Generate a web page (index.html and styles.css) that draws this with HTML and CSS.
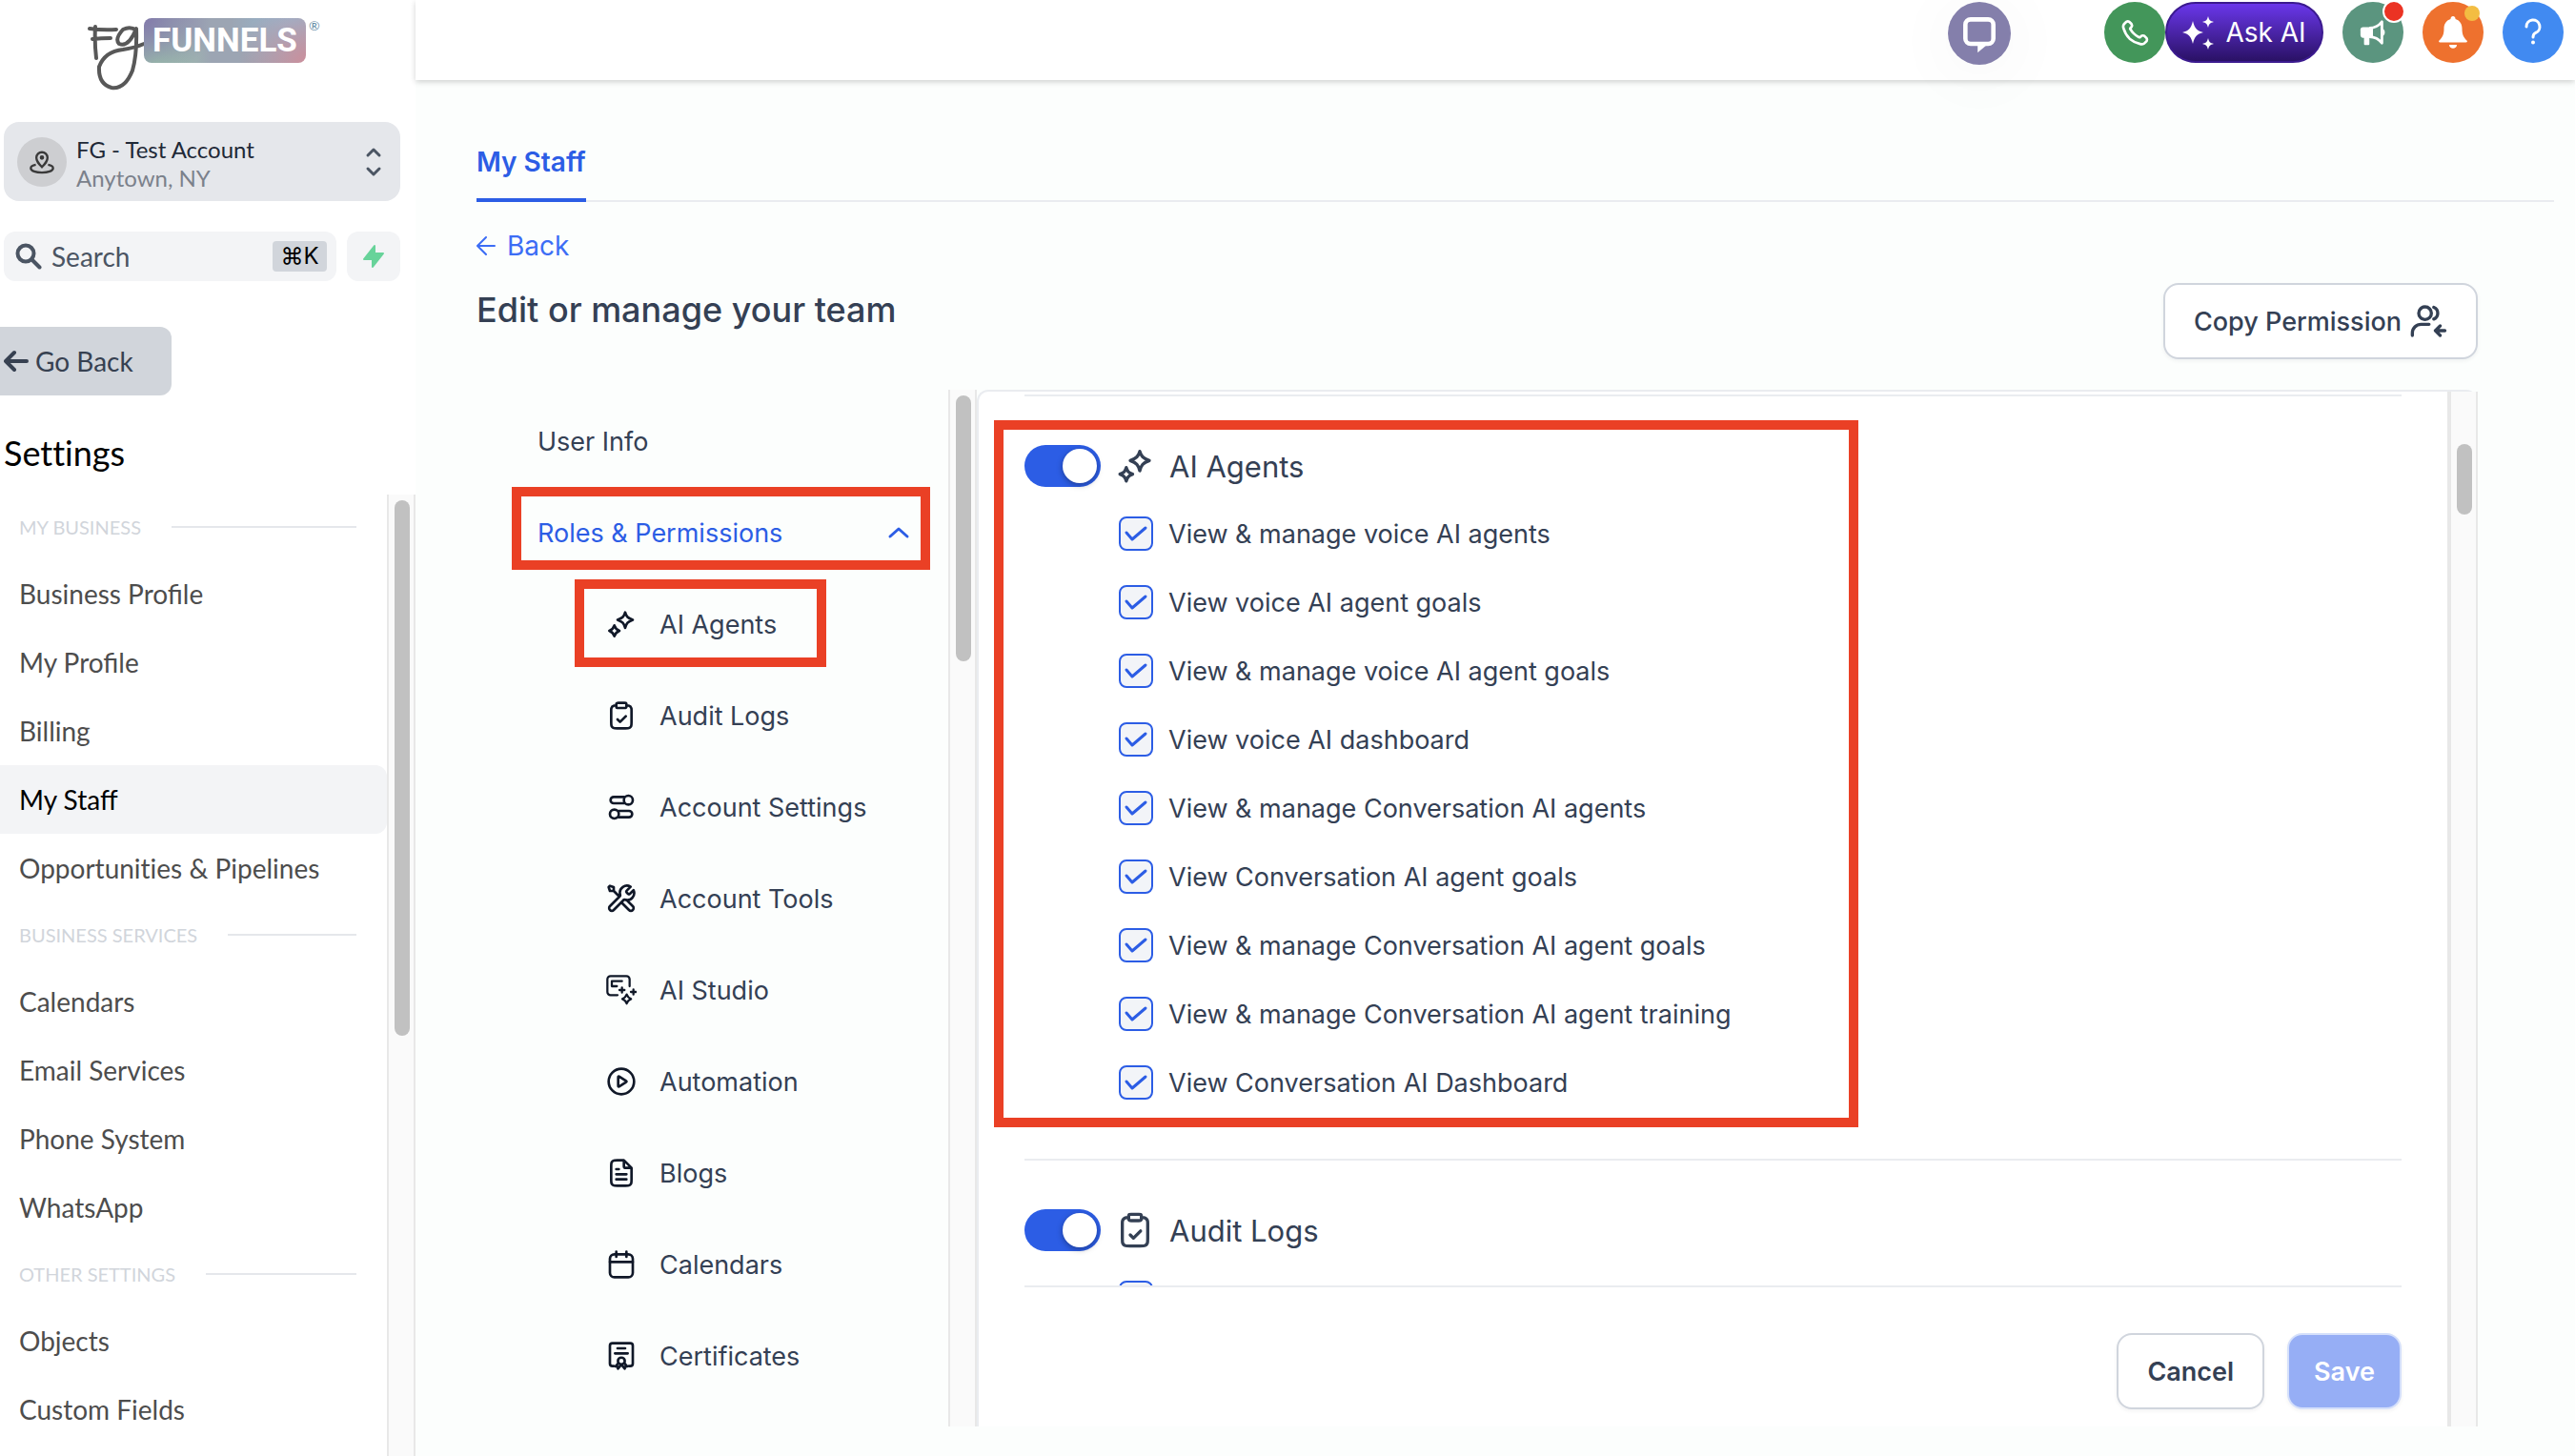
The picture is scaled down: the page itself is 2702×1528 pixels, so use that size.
FILE: index.html
```html
<!DOCTYPE html>
<html lang="en">
<head>
<meta charset="utf-8">
<meta name="viewport" content="width=device-width, initial-scale=1">
<title>My Staff - FG Funnels</title>
<link rel="stylesheet" href="styles.css">
</head>
<body>
<svg class="sprite" aria-hidden="true">
  <symbol id="i-stars" viewBox="0 0 24 24"><path d="M15 2.8 C15.9 6 17 7.1 21 8.6 C17 10.1 15.9 11.300 15 15 C14.100 11.300 13 10.100 9 8.600 C13 7.100 14.100 6 15 2.800Z M6.500 13 C7.200 15.400 7.900 16.200 10.500 17.200 C7.900 18.200 7.200 19 6.500 21.500 C5.800 19 5.100 18.200 2.500 17.200 C5.100 16.200 5.800 15.400 6.500 13Z"/></symbol>
  <symbol id="i-clipboard" viewBox="0 0 24 24"><path d="M16 4c.93 0 1.400 0 1.780.100a3 3 0 0 1 2.120 2.120C20 6.600 20 7.070 20 8v9.200c0 1.680 0 2.520-.330 3.160a3 3 0 0 1-1.310 1.310C17.720 22 16.880 22 15.200 22H8.800c-1.680 0-2.520 0-3.160-.330a3 3 0 0 1-1.310-1.310C4 19.720 4 18.880 4 17.200V8c0-.930 0-1.400.100-1.780a3 3 0 0 1 2.120-2.120C6.600 4 7.070 4 8 4m1 11 2 2 4.500-4.500M9.600 6h4.800c.560 0 .840 0 1.050-.110a1 1 0 0 0 .440-.440C16 5.240 16 4.960 16 4.400v-.800c0-.560 0-.840-.110-1.050a1 1 0 0 0-.440-.440C15.240 2 14.960 2 14.400 2H9.600c-.560 0-.840 0-1.050.110a1 1 0 0 0-.440.440C8 2.760 8 3.040 8 3.600v.800c0 .560 0 .840.110 1.050a1 1 0 0 0 .440.440C8.760 6 9.040 6 9.600 6Z"/></symbol>
  <symbol id="i-sliders" viewBox="0 0 24 24"><path d="M14 4H6a2.500 2.500 0 0 0 0 5h8M10 15h8a2.500 2.500 0 0 1 0 5h-8"/><circle cx="17.500" cy="6.500" r="3.500"/><circle cx="6.500" cy="17.500" r="3.500"/></symbol>
  <symbol id="i-tools" viewBox="0 0 24 24"><path d="m6 6 4.500 4.500M6 6H3L2 3l1-1 3 1v3Zm13.260-3.260-2.630 2.630c-.400.400-.590.590-.670.820a1 1 0 0 0 0 .620c.080.230.270.430.670.820l.240.240c.400.400.590.590.820.670a1 1 0 0 0 .620 0c.230-.080.430-.270.820-.670l2.470-2.460A5.500 5.500 0 0 1 15.400 13c-.530-.110-.800-.160-.960-.150a1.100 1.100 0 0 0-.430.120c-.140.070-.290.220-.570.500L6 21a2.120 2.120 0 0 1-3-3l7.500-7.500c.290-.290.430-.430.500-.570.090-.160.110-.250.120-.430.010-.160-.040-.430-.150-.960a5.500 5.500 0 0 1 8.290-5.800ZM12 15l6 6a2.120 2.120 0 0 0 3-3l-5-5"/></symbol>
  <symbol id="i-studio" viewBox="0 0 24 24"><path stroke-width="1.700" d="M9 16H3.500A2.500 2.500 0 0 1 1 13.500v-10A2.500 2.500 0 0 1 3.500 1H16a2.500 2.500 0 0 1 2.500 2.500V9M4.500 9V5h8M4.500 9h4M12.500 10v4M10.500 12h4M21.500 11.500v4M19.500 13.500h4M16.200 15.500c.700 2 1.300 2.700 3.400 3.500-2.100.800-2.700 1.500-3.400 3.700-.700-2.200-1.300-2.900-3.400-3.700 2.100-.800 2.700-1.500 3.400-3.500Z"/></symbol>
  <symbol id="i-play" viewBox="0 0 24 24"><circle cx="12" cy="12" r="10"/><path d="M9.500 8.970c0-.480 0-.720.100-.850a.500.500 0 0 1 .360-.200c.170-.010.370.120.770.380l4.720 3.030c.350.220.520.330.580.480a.500.500 0 0 1 0 .380c-.060.150-.230.260-.580.480l-4.720 3.030c-.400.260-.600.390-.770.380a.500.500 0 0 1-.360-.200c-.100-.130-.100-.370-.100-.850V8.970Z"/></symbol>
  <symbol id="i-file" viewBox="0 0 24 24"><path d="M14 2.270V6.400c0 .560 0 .840.110 1.050a1 1 0 0 0 .440.440c.210.110.490.110 1.050.110h4.130M16 13H8M16 17H8M10 9H8M14 2H8.800c-1.680 0-2.520 0-3.160.330a3 3 0 0 0-1.310 1.310C4 4.280 4 5.120 4 6.800v10.400c0 1.680 0 2.520.330 3.160a3 3 0 0 0 1.310 1.310C6.280 22 7.120 22 8.800 22h6.400c1.680 0 2.520 0 3.160-.330a3 3 0 0 0 1.310-1.310C20 19.720 20 18.880 20 17.200V8l-6-6Z"/></symbol>
  <symbol id="i-calendar" viewBox="0 0 24 24"><rect x="3" y="4" width="18" height="18" rx="3.500"/><path d="M21 10H3M16 2v4M8 2v4"/></symbol>
  <symbol id="i-cert" viewBox="0 0 24 24"><path d="M6 20H5a2 2 0 0 1-2-2V4a2 2 0 0 1 2-2h14a2 2 0 0 1 2 2v14a2 2 0 0 1-2 2h-1M9 6h6M7 10h10"/><circle cx="12" cy="16" r="2.700"/><path d="m9.800 17.500-2.300 2.700 1.500.300.300 1.500 2.300-2.800M14.200 17.500l2.300 2.700-1.500.300-.300 1.500-2.300-2.800"/></symbol>
</svg>

<div class="app">
  <aside class="sidebar">
    <a class="logo" href="#" aria-label="FG Funnels home">
      <svg class="logo-mark" viewBox="0 0 60 70" aria-hidden="true"><path d="M2 4 Q16 6 30 5M8 2Q7 18 9 35M5 15Q14 14 24 14M51 6Q45 1 37 5 Q28 15 33 20 Q43 24 51 4 Q52 30 47 48 Q39 68 25 66 Q11 62 12 44 Q18 28 37 26 Q50 24 59 20"/></svg>
      <span class="logo-badge">FUNNELS</span><span class="logo-reg">®</span>
    </a>

    <button class="account" type="button">
      <span class="account-pin"><svg viewBox="0 0 24 24" aria-hidden="true"><path d="M12 16.500c3-3 5-5 5-8.300a5 5 0 0 0-10 0c0 3.300 2 5.300 5 8.300Z"/><circle cx="12" cy="8" r="1"/><path d="M6.500 14.500C3.500 15 2 16.200 2 17.500 2 20 6.500 21.500 12 21.500s10-1.500 10-4c0-1.300-1.500-2.500-4.500-3"/></svg></span>
      <span class="account-text"><span class="account-name">FG - Test Account</span><span class="account-place">Anytown, NY</span></span>
      <svg class="account-caret" viewBox="0 0 18 32" aria-hidden="true"><path d="m3 9 6-6 6 6M3 23l6 6 6-6"/></svg>
    </button>

    <div class="search-row">
      <label class="search">
        <svg viewBox="0 0 28 28" aria-hidden="true"><circle cx="11" cy="11" r="8.500"/><path d="m17.500 17.500 8 8"/></svg>
        <input type="search" placeholder="Search" aria-label="Search">
        <kbd>⌘K</kbd>
      </label>
      <button class="bolt" type="button" aria-label="Quick actions"><svg viewBox="0 0 24 26" aria-hidden="true"><path d="M13 2v8h9L11 24v-8H2Z"/></svg></button>
    </div>

    <a class="go-back" href="#"><svg viewBox="0 0 26 24" aria-hidden="true"><path d="M24 12H3M11 3l-9 9 9 9"/></svg>Go Back</a>
    <h1 class="settings-title">Settings</h1>

    <div class="settings-scroll">
      <nav class="settings-nav" aria-label="Settings">
        <h2>MY BUSINESS</h2>
        <a href="#">Business Profile</a>
        <a href="#">My Profile</a>
        <a href="#">Billing</a>
        <a href="#" class="current" aria-current="page">My Staff</a>
        <a href="#" class="no-ligatures">Opportunities &amp; Pipelines</a>
        <h2>BUSINESS SERVICES</h2>
        <a href="#">Calendars</a>
        <a href="#">Email Services</a>
        <a href="#">Phone System</a>
        <a href="#">WhatsApp</a>
        <h2>OTHER SETTINGS</h2>
        <a href="#">Objects</a>
        <a href="#">Custom Fields</a>
      </nav>
      <div class="scrollbar scrollbar-settings" aria-hidden="true"><span></span></div>
    </div>
  </aside>

  <div class="page">
    <header class="topbar">
      <button class="round chat" type="button" aria-label="Chat"><svg viewBox="0 0 48 48" aria-hidden="true"><path d="M14 8h20a6 6 0 0 1 6 6v16a6 6 0 0 1-6 6H14a6 6 0 0 1-6-6V14a6 6 0 0 1 6-6Z" fill="none" stroke="#fff" stroke-width="5"/><path d="M22 36h12L22 46Z" fill="#fff"/></svg></button>
      <button class="round phone" type="button" aria-label="Call"><svg viewBox="0 0 24 24" aria-hidden="true"><path d="M8.380 8.850a14.600 14.600 0 0 0 2.850 4.010 14.600 14.600 0 0 0 4.010 2.850c.120.060.190.090.270.120.280.080.620.020.860-.150.070-.050.130-.110.250-.230.370-.370.550-.550.740-.670a2 2 0 0 1 2.180 0c.190.120.370.300.740.670l.200.200c.560.560.840.840.990 1.140a2 2 0 0 1 0 1.810c-.150.300-.430.580-.990 1.140l-.170.160c-.550.550-.820.830-1.200 1.040-.420.230-1.060.400-1.530.400-.430 0-.730-.080-1.320-.250A19 19 0 0 1 8.040 17a19 19 0 0 1-4.850-8.270c-.170-.590-.250-.880-.260-1.320 0-.480.170-1.120.400-1.530.210-.370.490-.650 1.040-1.200l.160-.160c.560-.560.840-.840 1.140-.990a2 2 0 0 1 1.810 0c.300.150.580.430 1.140.990l.200.200c.370.370.550.550.670.740a2 2 0 0 1 0 2.180c-.120.190-.300.370-.670.740-.120.120-.180.180-.230.250-.160.240-.220.590-.140.860.030.080.060.150.120.270Z" fill="none" stroke="#fff" stroke-width="2"/></svg></button>
      <button class="ask-ai" type="button"><svg viewBox="0 0 34 46" aria-hidden="true"><path d="M11 11c2 8 4 10 11 12-7 2-9 4-11 12-2-8-4-10-11-12 7-2 9-4 11-12ZM27 6c1 4 2 5 6 6-4 1-5 2-6 6-1-4-2-5-6-6 4-1 5-2 6-6ZM27 29c1 4 2 5 6 6-4 1-5 2-6 6-1-4-2-5-6-6 4-1 5-2 6-6Z"/></svg>Ask AI</button>
      <button class="round news" type="button" aria-label="Announcements"><svg viewBox="0 0 32 32" aria-hidden="true"><path d="M5 10h11v12H5a3 3 0 0 1-3-3v-6a3 3 0 0 1 3-3Z"/><path d="M6 20h6v9a1 1 0 0 1-1 1H7a1 1 0 0 1-1-1Z"/><path d="M12 11c6 0 11-3 14-7v24c-3-4-8-7-14-7" fill="none" stroke="#fff" stroke-width="3" stroke-linejoin="round"/><path d="M27 12c3 1 3 7 0 8Z"/></svg><span class="dot dot-red"></span></button>
      <button class="round bell" type="button" aria-label="Notifications"><svg viewBox="0 0 32 36" aria-hidden="true"><path d="M16 1a2.500 2.500 0 0 1 2.500 3c5 1.500 7 5.500 7 10 0 7 2 9.500 5 12.500.800 1 .300 2-1 2H2.500c-1.300 0-1.800-1-1-2 3-3 5-5.500 5-12.500 0-4.500 2-8.500 7-10A2.500 2.500 0 0 1 16 1ZM12 31h8c0 5-8 5-8 0Z"/></svg><span class="dot dot-yellow"></span></button>
      <button class="round help" type="button" aria-label="Help"><svg viewBox="0 0 24 32" aria-hidden="true"><path d="M5 10a7 7 0 1 1 9.500 6.500C12.500 17.500 12 19 12 21" fill="none" stroke="#fff" stroke-width="3" stroke-linecap="round"/><circle cx="12" cy="26.500" r="2"/></svg></button>
    </header>

    <div class="tabs" role="tablist"><button class="tab" type="button" role="tab" aria-selected="true">My Staff</button></div>

    <main class="content">
      <a class="back" href="#"><svg viewBox="0 0 20 22" aria-hidden="true"><path d="M19 11H2M10 2l-9 9 9 9"/></svg>Back</a>
      <div class="heading">
        <h2>Edit or manage your team</h2>
        <button class="btn" type="button">Copy Permission<svg viewBox="0 0 24 24" aria-hidden="true"><path d="M2 21v-1.500A5.500 5.500 0 0 1 7.500 14H12.500M15.500 3.300a4 4 0 0 1 0 7.400M22.500 18H17M19.500 15l-3 3 3 3"/><circle cx="10" cy="7" r="4"/></svg></button>
      </div>

      <div class="workspace">
        <nav class="menu" aria-label="Team member">
          <a class="menu-item" href="#">User Info</a>
          <a class="menu-item active" href="#">Roles &amp; Permissions<svg viewBox="0 0 24 24" aria-hidden="true"><path d="m3 16 9-8 9 8"/></svg><span class="mark mark-roles"></span></a>
          <a class="menu-sub" href="#"><svg class="icon" aria-hidden="true"><use href="#i-stars"/></svg>AI Agents<span class="mark mark-agents"></span></a>
          <a class="menu-sub" href="#"><svg class="icon" aria-hidden="true"><use href="#i-clipboard"/></svg>Audit Logs</a>
          <a class="menu-sub" href="#"><svg class="icon" aria-hidden="true"><use href="#i-sliders"/></svg>Account Settings</a>
          <a class="menu-sub" href="#"><svg class="icon" aria-hidden="true"><use href="#i-tools"/></svg>Account Tools</a>
          <a class="menu-sub" href="#"><svg class="icon" aria-hidden="true"><use href="#i-studio"/></svg>AI Studio</a>
          <a class="menu-sub" href="#"><svg class="icon" aria-hidden="true"><use href="#i-play"/></svg>Automation</a>
          <a class="menu-sub" href="#"><svg class="icon" aria-hidden="true"><use href="#i-file"/></svg>Blogs</a>
          <a class="menu-sub" href="#"><svg class="icon" aria-hidden="true"><use href="#i-calendar"/></svg>Calendars</a>
          <a class="menu-sub" href="#"><svg class="icon" aria-hidden="true"><use href="#i-cert"/></svg>Certificates</a>
        </nav>
        <div class="scrollbar scrollbar-menu" aria-hidden="true"><span></span></div>

        <section class="panel">
          <form class="panel-body">
            <div class="permissions">
              <section class="group">
                <label class="group-head"><input class="switch" type="checkbox" role="switch" checked><svg class="icon" aria-hidden="true"><use href="#i-stars"/></svg>AI Agents</label>
                <label class="perm"><input type="checkbox" checked>View &amp; manage voice AI agents</label>
                <label class="perm"><input type="checkbox" checked>View voice AI agent goals</label>
                <label class="perm"><input type="checkbox" checked>View &amp; manage voice AI agent goals</label>
                <label class="perm"><input type="checkbox" checked>View voice AI dashboard</label>
                <label class="perm"><input type="checkbox" checked>View &amp; manage Conversation AI agents</label>
                <label class="perm"><input type="checkbox" checked>View Conversation AI agent goals</label>
                <label class="perm"><input type="checkbox" checked>View &amp; manage Conversation AI agent goals</label>
                <label class="perm"><input type="checkbox" checked>View &amp; manage Conversation AI agent training</label>
                <label class="perm"><input type="checkbox" checked>View Conversation AI Dashboard</label>
                <span class="mark mark-group"></span>
              </section>
              <section class="group">
                <label class="group-head"><input class="switch" type="checkbox" role="switch" checked><svg class="icon" aria-hidden="true"><use href="#i-clipboard"/></svg>Audit Logs</label>
                <div class="perm"><input type="checkbox" checked aria-label="Audit logs permission"></div>
              </section>
            </div>
            <div class="actions">
              <button class="btn" type="button">Cancel</button>
              <button class="btn btn-save" type="submit" disabled>Save</button>
            </div>
          </form>
          <div class="scrollbar scrollbar-panel" aria-hidden="true"><span></span></div>
        </section>
      </div>
    </main>
  </div>
</div>
</body>
</html>
```
FILE: styles.css
```css
:root {
  --ink: #344054;
  --blue: #2c5de5;
  --line: #eaecf0;
  --mark: #ea4025;
}

* { box-sizing: border-box; }

body {
  margin: 0;
  font-family: Inter, "Liberation Sans", sans-serif;
  font-size: 28px;
  color: var(--ink);
  background: #fcfefd;
}

a { color: inherit; text-decoration: none; }
button, input { font: inherit; color: inherit; margin: 0; }
button { border: 0; padding: 0; background: none; cursor: pointer; }
svg { display: block; flex: none; }
h1, h2 { margin: 0; }
.sprite { display: none; }

.app { display: flex; height: 100vh; overflow: hidden; }

/* Sidebar */
.sidebar {
  width: 436px;
  flex: none;
  display: flex;
  flex-direction: column;
  background: #fff;
  font-family: Lato, "Liberation Sans", sans-serif;
}

.logo { display: flex; align-items: flex-start; height: 128px; flex: none; padding: 19px 0 0 92px; }
.logo-mark { width: 60px; height: 70px; margin-top: 7px; fill: none; stroke: #585858; stroke-width: 4; stroke-linecap: round; stroke-linejoin: round; }
.logo-badge {
  width: 170px;
  height: 47px;
  margin-left: -1px;
  border-radius: 8px;
  font: 700 35px/47px Roboto, "Liberation Sans", sans-serif;
  text-align: center;
  color: #fff;
  background:
    radial-gradient(circle at 0 0, #827aab, transparent 40%),
    radial-gradient(circle at 8% 100%, #9fcbaa, transparent 35%),
    radial-gradient(circle at 100% 100%, #cb8f9c, transparent 40%),
    radial-gradient(circle at 92% 0, #93b9d2, transparent 40%),
    #9ca5b3;
}
.logo-reg { margin-left: 3px; font-size: 14px; line-height: 16px; color: #5f8ba6; }

.account {
  display: flex;
  align-items: center;
  gap: 10px;
  height: 83px;
  flex: none;
  margin: 0 16px 0 4px;
  padding: 0 19px 0 14px;
  border-radius: 16px;
  background: #e5e7eb;
  text-align: left;
}
.account-pin { display: grid; place-items: center; width: 52px; height: 52px; border-radius: 50%; background: #cdced1; }
.account-pin svg { width: 28px; height: 28px; fill: none; stroke: #3a3a3a; stroke-width: 2; }
.account-text { flex: 1; display: flex; flex-direction: column; padding-top: 5px; font-size: 24px; line-height: 30px; }
.account-name { color: #1f2937; }
.account-place { color: #7b818b; }
.account-caret { width: 18px; height: 32px; fill: none; stroke: #4b5563; stroke-width: 3; stroke-linecap: round; stroke-linejoin: round; }

.search-row { display: flex; gap: 11px; margin: 32px 16px 0 4px; height: 52px; flex: none; }
.search { flex: 1; min-width: 0; display: flex; align-items: center; gap: 10px; padding: 0 10px 0 12px; border-radius: 12px; background: #f3f4f6; color: #4b5563; }
.search svg { width: 28px; height: 28px; fill: none; stroke: #4b5563; stroke-width: 4; stroke-linecap: round; }
.search input { flex: 1; min-width: 0; border: 0; padding: 0; background: none; outline: 0; }
.search input::placeholder { color: #4b5563; opacity: 1; }
.search kbd { width: 57px; flex: none; border-radius: 4px; background: #d1d5db; color: #000; font: 24px/32px Inter, "DejaVu Sans", sans-serif; text-align: center; }
.bolt { display: grid; place-items: center; width: 56px; flex: none; border-radius: 12px; background: #f3f4f6; }
.bolt svg { width: 24px; height: 26px; fill: #68d39a; stroke: #68d39a; stroke-width: 2; stroke-linejoin: round; }

.go-back {
  align-self: flex-start;
  display: flex;
  align-items: center;
  gap: 7px;
  width: 180px;
  height: 72px;
  flex: none;
  margin-top: 48px;
  padding: 0 0 0 4px;
  border-radius: 0 12px 12px 0;
  background: #d1d5db;
  color: #374151;
}
.go-back svg { width: 26px; height: 24px; fill: none; stroke: #374151; stroke-width: 4; stroke-linecap: round; stroke-linejoin: round; }

.settings-title { margin: 36px 0 19px 4px; font-size: 36px; line-height: 49px; font-weight: 400; color: #000; }
.settings-title, .no-ligatures { font-variant-ligatures: none; }

.settings-scroll { flex: 1; min-height: 0; display: flex; }
.settings-nav { flex: 1; overflow: hidden; color: #4d4d4d; }
.settings-nav h2 { display: flex; align-items: center; gap: 32px; height: 68px; padding: 0 32px 0 20px; font-size: 20px; font-weight: 400; color: #d1d5db; }
.settings-nav h2::after { content: ""; flex: 1; height: 2px; background: #e5e7eb; }
.settings-nav a { display: flex; align-items: center; height: 72px; padding-left: 20px; border-radius: 0 12px 12px 0; }
.settings-nav .current { background: #f3f4f6; color: #000; }

/* Always-visible scrollbar tracks */
.scrollbar { width: 30px; flex: none; padding: 6px; border: solid #e8e8e8; border-width: 0 2px; background: #fafafa; }
.scrollbar span { display: block; width: 16px; border-radius: 8px; background: #c1c1c1; }
.scrollbar-settings span { height: 562px; }
.scrollbar-menu span { height: 279px; }
.scrollbar-panel { padding-top: 55px; }
.scrollbar-panel span { height: 74px; }

/* Top bar */
.page { flex: 1; min-width: 0; display: flex; flex-direction: column; }
.topbar {
  display: flex;
  justify-content: flex-end;
  height: 84px;
  flex: none;
  padding: 2px 12px 0 0;
  background: #fff;
  box-shadow: 0 2px 6px rgba(0, 0, 0, .18);
}
.round { position: relative; display: grid; place-items: center; width: 64px; height: 64px; margin-left: 20px; border-radius: 50%; }
.round svg { fill: #fff; }
.chat { width: 66px; height: 66px; margin-right: 98px; background: #847fab; box-shadow: 0 8px 60px 20px rgba(0, 0, 0, .02); }
.chat svg { width: 44px; height: 44px; }
.phone { margin-left: 0; background: #43965a; }
.phone svg { width: 32px; height: 32px; }
.ask-ai {
  display: flex;
  align-items: center;
  justify-content: center;
  gap: 11px;
  width: 166px;
  height: 64px;
  border: 2px solid #3b1a8f;
  border-radius: 32px;
  background: linear-gradient(#6a37ea, #2a1165);
  color: #fff;
}
.ask-ai svg { width: 34px; height: 46px; fill: #fff; }
.news { background: #5b957f; }
.news svg { width: 30px; height: 30px; }
.bell { background: #ee712e; }
.bell svg { width: 32px; height: 36px; }
.help { background: #418af1; }
.help svg { width: 24px; height: 32px; }
.dot { position: absolute; border-radius: 50%; }
.dot-red { top: -2px; right: -2px; width: 24px; height: 24px; border: 2px solid #fff; background: #eb3323; }
.dot-yellow { top: 4px; right: 4px; width: 16px; height: 16px; background: #f3bd42; }

/* Page content */
.tabs { display: flex; height: 80px; flex: none; margin: 48px 22px 0 64px; box-shadow: inset 0 -2px var(--line); }
.tab { border-bottom: 4px solid var(--blue); color: var(--blue); font-weight: 600; }

.content { flex: 1; min-height: 0; display: flex; flex-direction: column; padding: 28px 102px 31px 64px; }
.back { align-self: flex-start; display: flex; align-items: center; gap: 12px; line-height: 36px; color: #3c6df5; }
.back svg { width: 20px; height: 22px; fill: none; stroke: #3c6df5; stroke-width: 2; stroke-linecap: round; stroke-linejoin: round; }
.heading { display: flex; justify-content: space-between; align-items: flex-start; margin: 21px 0 32px; }
.heading h2 { font-size: 36px; line-height: 56px; font-weight: 500; }

.btn {
  display: flex;
  align-items: center;
  gap: 8px;
  height: 80px;
  padding: 0 30px;
  border: 2px solid #d0d5dd;
  border-radius: 16px;
  background: #fff;
  box-shadow: 0 2px 4px rgba(16, 24, 40, .05);
  font-size: 27px;
  font-weight: 500;
}
.btn svg { width: 40px; height: 40px; fill: none; stroke: var(--ink); stroke-width: 2; stroke-linecap: round; stroke-linejoin: round; }
.actions .btn { font-weight: 600; }
.actions .btn-save { padding: 0 26px; border-color: #d5e0fb; background: #96aef5; color: #fff; }

.workspace { flex: 1; min-height: 0; display: flex; font-size: 27px; }
.menu { width: 495px; flex: none; padding-top: 6px; overflow: hidden; }
.menu-item, .menu-sub { position: relative; display: flex; align-items: center; height: 96px; }
.menu-item { justify-content: space-between; padding: 0 40px 0 64px; }
.menu-item svg { width: 24px; height: 24px; fill: none; stroke: var(--blue); stroke-width: 3; stroke-linecap: round; stroke-linejoin: round; }
.active { color: var(--blue); }
.menu-sub { gap: 24px; padding-left: 136px; }
.menu-sub .icon { width: 32px; height: 32px; stroke: #101828; }
.icon { fill: none; stroke-width: 2; stroke-linecap: round; stroke-linejoin: round; }

.panel { flex: 1; min-width: 0; display: flex; border: solid var(--line); border-width: 2px 0 0 2px; border-radius: 12px 12px 0 0; background: #fff; }
.panel-body { flex: 1; min-width: 0; display: flex; flex-direction: column; padding: 3px 48px 18px; border-right: 2px solid #e8e8e8; }
.permissions { flex: 1; min-height: 0; overflow: hidden; margin-left: -32px; padding-left: 32px; }
.group { position: relative; padding: 38px 0 44px; border-top: 2px solid var(--line); }
.group-head { display: flex; align-items: center; gap: 16px; height: 70px; font-size: 31px; }
.group-head .icon { width: 40px; height: 40px; stroke: var(--ink); }
.switch { appearance: none; width: 80px; height: 44px; padding: 4px; border-radius: 22px; background: var(--blue); }
.switch::before { content: ""; display: block; width: 36px; height: 36px; margin-left: auto; border-radius: 50%; background: #fff; box-shadow: 0 2px 6px rgba(0, 0, 0, .35); }
.perm { display: flex; align-items: center; gap: 16px; height: 72px; padding-left: 99px; }
.perm input {
  appearance: none;
  width: 36px;
  height: 36px;
  border: 2px solid var(--blue);
  border-radius: 8px;
  background: #f2f4f8 url("data:image/svg+xml,%3Csvg xmlns='http://www.w3.org/2000/svg' viewBox='0 0 32 32'%3E%3Cpath d='M6 15l6 7L26 10' fill='none' stroke='%232c5de5' stroke-width='3' stroke-linecap='round' stroke-linejoin='round'/%3E%3C/svg%3E") center / 100%;
}
.actions { display: flex; justify-content: flex-end; gap: 24px; padding-top: 48px; border-top: 2px solid var(--line); }

/* Red call-out frames over the page */
.mark { position: absolute; border: 10px solid var(--mark); pointer-events: none; }
.mark-roles { inset: 0 19px 9px 37px; }
.mark-agents { top: 1px; bottom: 3px; left: 103px; width: 264px; }
.mark-group { top: 25px; bottom: 33px; left: -32px; width: 907px; }
```
